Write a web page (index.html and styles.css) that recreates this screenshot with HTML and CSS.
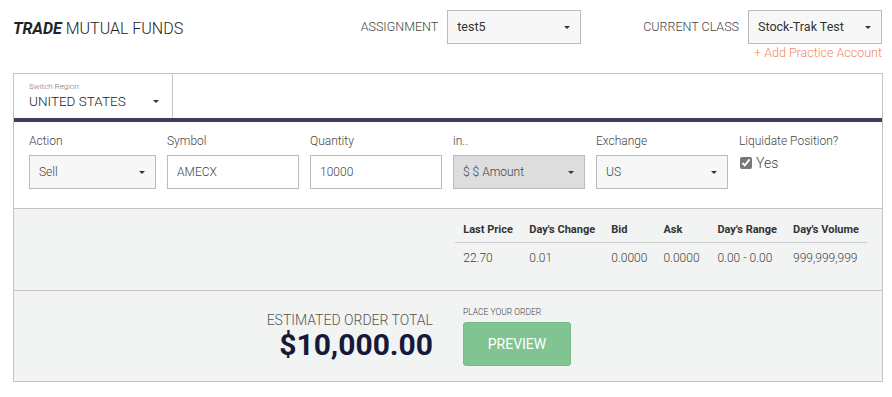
FILE: index.html
```html
<!DOCTYPE html>
<html lang="en">
<head>
    <meta charset="UTF-8">
    <meta name="viewport" content="width=device-width, initial-scale=1.0">
    <title>Trade Mutual Funds</title>
    <link rel="stylesheet" href="styles.css">
</head>
<body>
    <div class="page">
        <header class="top">
            <h1 class="title"><b>TRADE</b> MUTUAL FUNDS</h1>
            <div class="picker">
                <span class="picker-label">ASSIGNMENT</span>
                <div class="select">test5<span class="caret"></span></div>
            </div>
            <div class="picker picker-class">
                <span class="picker-label">CURRENT CLASS</span>
                <div class="picker-col">
                    <div class="select">Stock-Trak Test<span class="caret"></span></div>
                    <a class="add-link" href="#">+ Add Practice Account</a>
                </div>
            </div>
        </header>

        <div class="panel">
            <div class="region-row">
                <div class="region">
                    <div class="region-label">Switch Region</div>
                    <div class="region-value">UNITED STATES<span class="caret"></span></div>
                </div>
            </div>

            <div class="order-form">
                <div class="field field-action">
                    <label>Action</label>
                    <div class="input select-in">Sell<span class="caret"></span></div>
                </div>
                <div class="field">
                    <label>Symbol</label>
                    <div class="input">AMECX</div>
                </div>
                <div class="field">
                    <label>Quantity</label>
                    <div class="input">10000</div>
                </div>
                <div class="field">
                    <label>in..</label>
                    <div class="input select-in disabled">$ $ Amount<span class="caret"></span></div>
                </div>
                <div class="field">
                    <label>Exchange</label>
                    <div class="input select-in">US<span class="caret"></span></div>
                </div>
                <div class="field">
                    <label>Liquidate Position?</label>
                    <div class="check"><input type="checkbox" checked> Yes</div>
                </div>
            </div>

            <div class="quote">
                <table class="quote-table">
                    <thead>
                        <tr>
                            <th>Last Price</th>
                            <th>Day's Change</th>
                            <th>Bid</th>
                            <th>Ask</th>
                            <th>Day's Range</th>
                            <th>Day's Volume</th>
                        </tr>
                    </thead>
                    <tbody>
                        <tr>
                            <td>22.70</td>
                            <td>0.01</td>
                            <td>0.0000</td>
                            <td>0.0000</td>
                            <td>0.00 - 0.00</td>
                            <td>999,999,999</td>
                        </tr>
                    </tbody>
                </table>
            </div>

            <div class="summary">
                <div class="total">
                    <div class="total-label">ESTIMATED ORDER TOTAL</div>
                    <div class="total-value">$10,000.00</div>
                </div>
                <div class="place">
                    <div class="place-label">PLACE YOUR ORDER</div>
                    <button class="preview">PREVIEW</button>
                </div>
            </div>
        </div>
    </div>
</body>
</html>
```

FILE: styles.css
```css
body {
    margin: 0;
    font-family: Roboto, "Liberation Sans", Arial, sans-serif;
    color: #555;
    background: #fff;
}
.page {
    width: 870px;
    margin-left: 13px;
}
.top {
    display: flex;
    align-items: flex-start;
    height: 73px;
    padding-top: 10px;
    box-sizing: border-box;
}
.title {
    flex: 1;
    margin: 9px 0 0 0;
    font-size: 16px;
    font-weight: 300;
    color: #222;
}
.title b {
    font-weight: 700;
    font-style: italic;
}
.picker {
    display: flex;
    align-items: flex-start;
}
.picker-label {
    font-size: 12.5px;
    font-weight: 300;
    line-height: 34px;
    color: #444;
    margin-right: 9px;
}
.picker-class {
    margin-left: 62px;
    margin-right: 1px;
}
.picker-col {
    display: flex;
    flex-direction: column;
    align-items: flex-end;
}
.select {
    position: relative;
    width: 134px;
    height: 34px;
    box-sizing: border-box;
    border: 1px solid #bbb;
    background: #f7f7f7;
    padding-left: 9px;
    font-size: 12.5px;
    line-height: 32px;
    color: #333;
}
.caret {
    position: absolute;
    right: 10px;
    top: 50%;
    margin-top: -1px;
    border-left: 3px solid transparent;
    border-right: 3px solid transparent;
    border-top: 3px solid #333;
}
.add-link {
    margin-top: 1px;
    font-size: 12.5px;
    font-weight: 300;
    color: #ee8a62;
    text-decoration: none;
}

.panel {
    border: 1px solid #c4c4c4;
}
.region-row {
    border-bottom: 4px solid #3c3d5e;
}
.region {
    width: 159px;
    height: 44px;
    box-sizing: border-box;
    border-right: 1px solid #c4c4c4;
    padding: 8px 0 0 15px;
}
.region-label {
    font-size: 8px;
    font-weight: 300;
    color: #777;
}
.region-value {
    position: relative;
    width: 130px;
    font-size: 13.5px;
    font-weight: 300;
    color: #222;
    margin-top: 2px;
}
.region-value .caret {
    right: 0;
}

.order-form {
    display: grid;
    grid-template-columns: 127px 132px 132px 132px 132px 1fr;
    column-gap: 11px;
    padding: 11px 15px 19px 15px;
    border-bottom: 1px solid #c4c4c4;
}
.field label {
    display: block;
    font-size: 12px;
    font-weight: 300;
    line-height: 16px;
    margin-bottom: 6px;
    color: #444;
}
.input {
    position: relative;
    height: 34px;
    box-sizing: border-box;
    border: 1px solid #bbb;
    background: #fff;
    padding-left: 9px;
    font-size: 12px;
    font-weight: 300;
    line-height: 32px;
    color: #444;
}
.select-in {
    background: #f7f7f7;
}
.select-in.disabled {
    background: #ddd;
}
.check {
    display: flex;
    align-items: center;
    font-size: 14px;
    font-weight: 300;
    color: #444;
    margin-top: 0;
}
.check input {
    margin: 0 4px 0 1px;
    width: 12px;
    height: 12px;
    accent-color: #777;
}

.quote {
    background: #f2f3f3;
    height: 82px;
    padding: 7px 15px 0 0;
    box-sizing: border-box;
    border-bottom: 1px solid #c4c4c4;
    display: flex;
    justify-content: flex-end;
    align-items: flex-start;
}
.quote-table {
    border-collapse: collapse;
    font-size: 11px;
}
.quote-table th {
    text-align: left;
    font-weight: 700;
    color: #333;
    white-space: nowrap;
    padding: 0 8px;
    border-bottom: 1px solid #ccc;
    height: 26px;
}
.quote-table td {
    text-align: left;
    font-size: 12px;
    font-weight: 300;
    color: #444;
    white-space: nowrap;
    padding: 0 8px;
    height: 30px;
}
.quote-table th:nth-child(1) { width: 50px; }
.quote-table th:nth-child(2) { width: 66px; }
.quote-table th:nth-child(3) { width: 36px; }
.quote-table th:nth-child(4) { width: 38px; }
.quote-table th:nth-child(5) { width: 59px; }
.quote-table th:nth-child(6) { width: 66px; }

.summary {
    display: grid;
    grid-template-columns: 1fr 1fr;
    background: #f2f3f3;
    height: 90px;
    box-sizing: border-box;
    padding-top: 16px;
}
.total {
    text-align: right;
    padding: 5px 15px 0 0;
}
.total-label {
    font-size: 14px;
    font-weight: 300;
    line-height: 16px;
    color: #555;
}
.total-value {
    font-size: 30px;
    font-weight: 700;
    color: #17193a;
    line-height: 34px;
}
.place {
    padding-left: 15px;
}
.place-label {
    font-size: 8.5px;
    font-weight: 300;
    color: #444;
    line-height: 10px;
    margin-bottom: 5px;
}
.preview {
    display: block;
    width: 108px;
    height: 44px;
    background: #80c491;
    border: 1px solid #78bb89;
    border-radius: 3px;
    color: #fff;
    font-family: inherit;
    font-size: 14px;
    font-weight: 400;
}
```
